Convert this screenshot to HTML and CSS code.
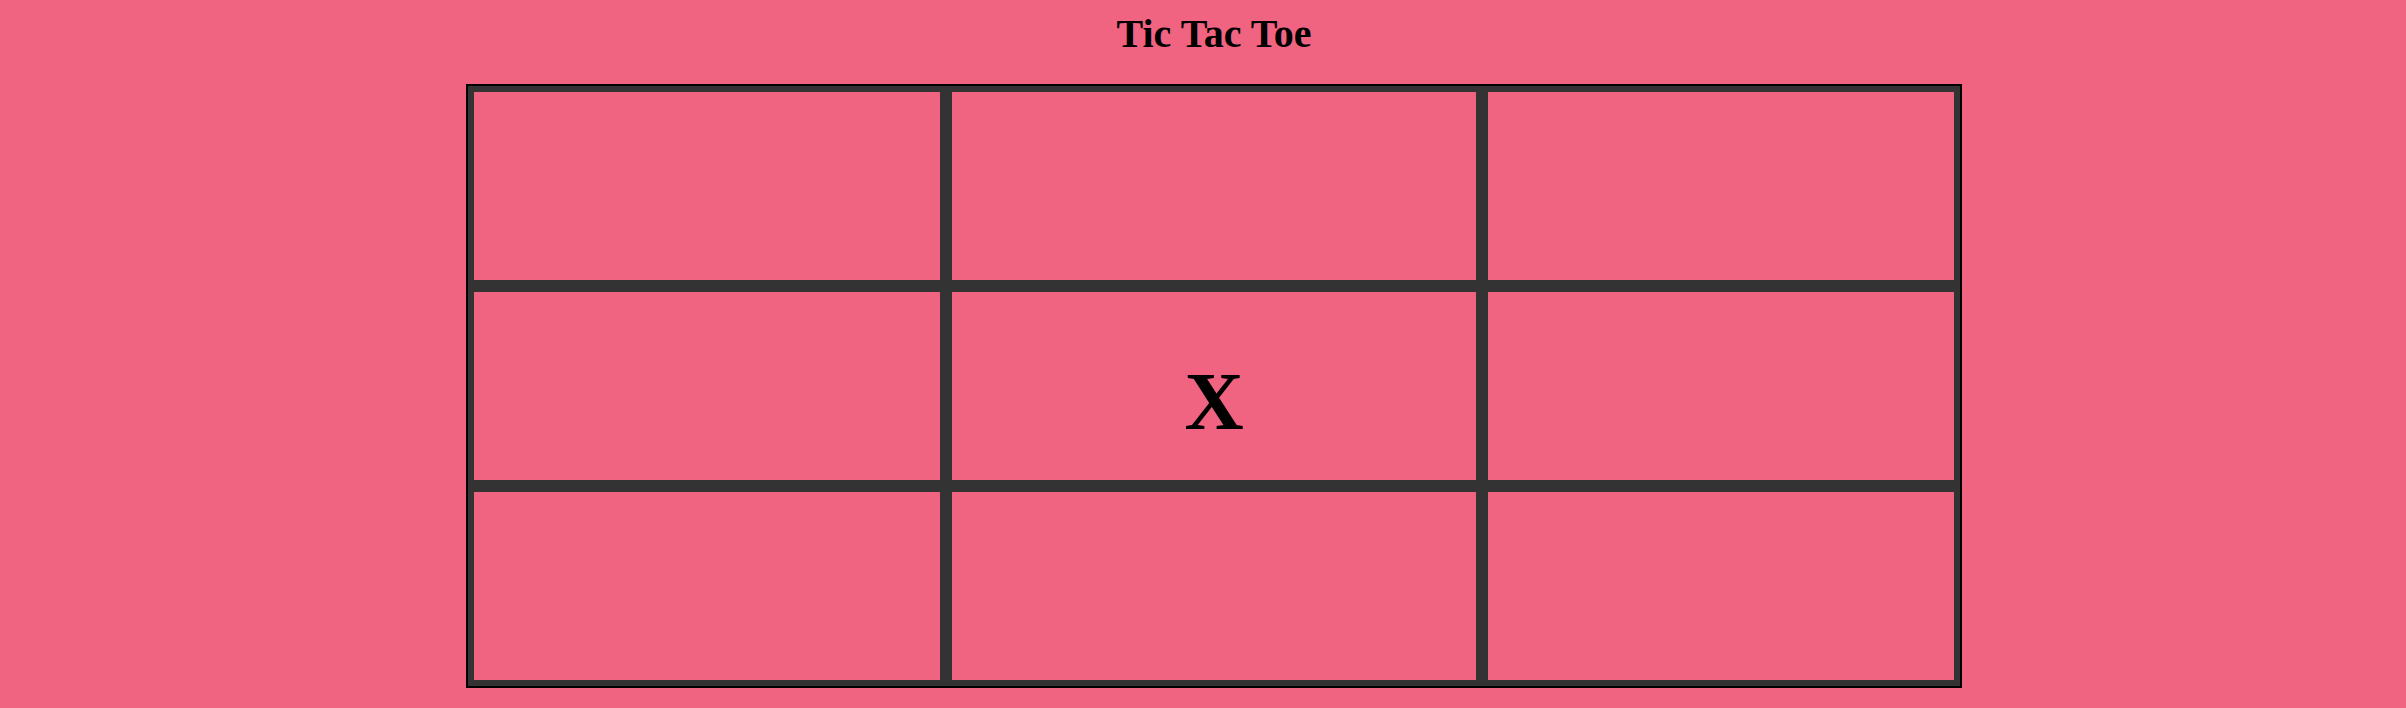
FILE: index.html
```html
<!DOCTYPE html>
<html>
<head>
<meta charset="utf-8">
<title>Tic Tac Toe</title>
<link rel="stylesheet" href="styles.css">
</head>
<body>
<div class="page">
  <h1 class="title">Tic Tac Toe</h1>
  <div class="board">
    <div class="cell"></div>
    <div class="cell"></div>
    <div class="cell"></div>
    <div class="cell"></div>
    <div class="cell">X</div>
    <div class="cell"></div>
    <div class="cell"></div>
    <div class="cell"></div>
    <div class="cell"></div>
  </div>
</div>
</body>
</html>
```
FILE: styles.css
```css
html, body {
  margin: 0;
  padding: 0;
  background: #f06482;
}
body {
  font-family: "Liberation Serif", "Times New Roman", serif;
  color: #000;
}
.page {
  display: flex;
  flex-direction: column;
  align-items: center;
  padding-left: 22px;
  height: 708px;
  box-sizing: border-box;
}
.title {
  margin: 13px 0 29px;
  font-size: 40px;
  line-height: 42px;
  font-weight: bold;
}
.board {
  display: grid;
  grid-template-columns: 478px 536px 478px;
  grid-template-rows: 200px 200px 200px;
  border: 2px solid #000;
}
.cell {
  box-sizing: border-box;
  border: 6px solid #333;
  display: flex;
  justify-content: center;
  align-items: flex-start;
  padding-top: 70px;
  font-size: 82px;
  line-height: 80px;
  font-weight: bold;
}
```
